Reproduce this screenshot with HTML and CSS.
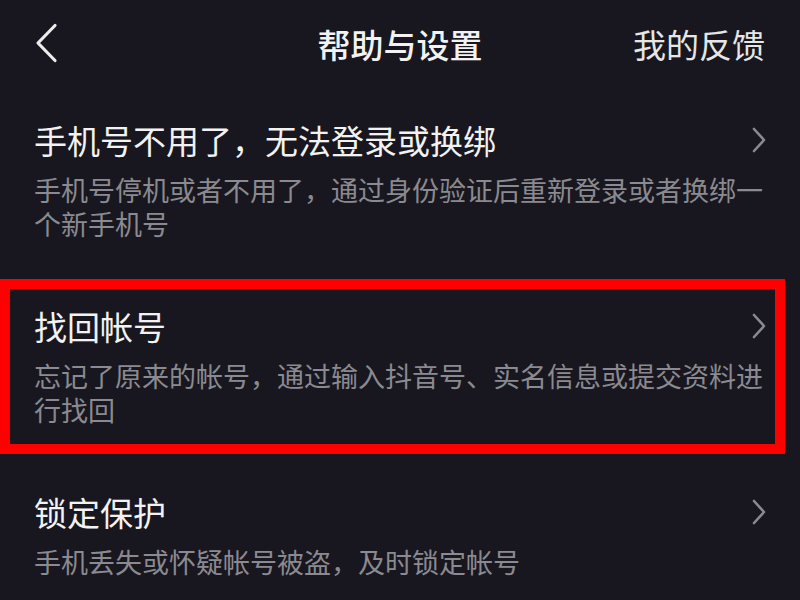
FILE: index.html
```html
<!DOCTYPE html>
<html lang="zh-CN">
<head>
<meta charset="utf-8">
<title>帮助与设置</title>
<link rel="stylesheet" href="styles.css">
</head>
<body>
<div class="page">
  <header class="header">
    <div class="back">
      <svg width="24" height="40" viewBox="0 0 24 40" aria-hidden="true">
        <path d="M20 2.5 L3 20 L20 37.5" fill="none" stroke="#ececec" stroke-width="3.2" stroke-linecap="round" stroke-linejoin="round"/>
      </svg>
    </div>
    <h1 class="title">帮助与设置</h1>
    <div class="feedback">我的反馈</div>
  </header>

  <section class="item">
    <div class="row">
      <span class="item-title">手机号不用了，无法登录或换绑</span>
      <svg class="chev" width="16" height="26" viewBox="0 0 16 26" aria-hidden="true"><path d="M3 2 L13 13 L3 24" fill="none" stroke="#8a8a90" stroke-width="2.6" stroke-linecap="round" stroke-linejoin="round"/></svg>
    </div>
    <p class="item-sub">手机号停机或者不用了，通过身份验证后重新登录或者换绑一个新手机号</p>
  </section>

  <section class="item item-marked">
    <div class="row">
      <span class="item-title">找回帐号</span>
      <svg class="chev" width="16" height="26" viewBox="0 0 16 26" aria-hidden="true"><path d="M3 2 L13 13 L3 24" fill="none" stroke="#8a8a90" stroke-width="2.6" stroke-linecap="round" stroke-linejoin="round"/></svg>
    </div>
    <p class="item-sub">忘记了原来的帐号，通过输入抖音号、实名信息或提交资料进行找回</p>
    <div class="mark"></div>
  </section>

  <section class="item">
    <div class="row">
      <span class="item-title">锁定保护</span>
      <svg class="chev" width="16" height="26" viewBox="0 0 16 26" aria-hidden="true"><path d="M3 2 L13 13 L3 24" fill="none" stroke="#8a8a90" stroke-width="2.6" stroke-linecap="round" stroke-linejoin="round"/></svg>
    </div>
    <p class="item-sub">手机丢失或怀疑帐号被盗，及时锁定帐号</p>
  </section>
</div>
</body>
</html>
```

FILE: styles.css
```css
html, body {
  margin: 0;
  padding: 0;
  background: #18171f;
}

body {
  font-family: "Noto Sans CJK SC", "Noto Sans", sans-serif;
  color: #f0f0f0;
  width: 800px;
  height: 600px;
  overflow: hidden;
}

.page {
  display: flex;
  flex-direction: column;
}

.header {
  height: 88px;
  display: grid;
  grid-template-columns: 1fr auto 1fr;
  align-items: center;
  padding: 0 35px 0 35px;
}

.back {
  display: flex;
  align-items: center;
  height: 40px;
  margin-top: -2px;
}

.back svg {
  display: block;
}

.title {
  margin: 0;
  font-size: 33px;
  font-weight: 500;
  line-height: 40px;
  color: #f2f2f2;
  letter-spacing: 0;
}

.feedback {
  justify-self: end;
  font-size: 33px;
  line-height: 40px;
  color: #e6e6e6;
}

.item {
  padding: 32px 34px 33px 34px;
  position: relative;
}

.row {
  display: flex;
  justify-content: space-between;
  align-items: center;
  height: 40px;
}

.item-title {
  font-size: 33px;
  line-height: 40px;
  color: #f2f2f2;
}

.chev {
  display: block;
  margin-right: -1px;
}

.item-sub {
  margin: 13px 0 0 0;
  font-size: 27px;
  line-height: 34px;
  color: #8a8a90;
}

.mark {
  position: absolute;
  left: 0;
  top: 5px;
  width: 785px;
  height: 175px;
  box-sizing: border-box;
  border: 10px solid #ff0000;
  pointer-events: none;
}
```
